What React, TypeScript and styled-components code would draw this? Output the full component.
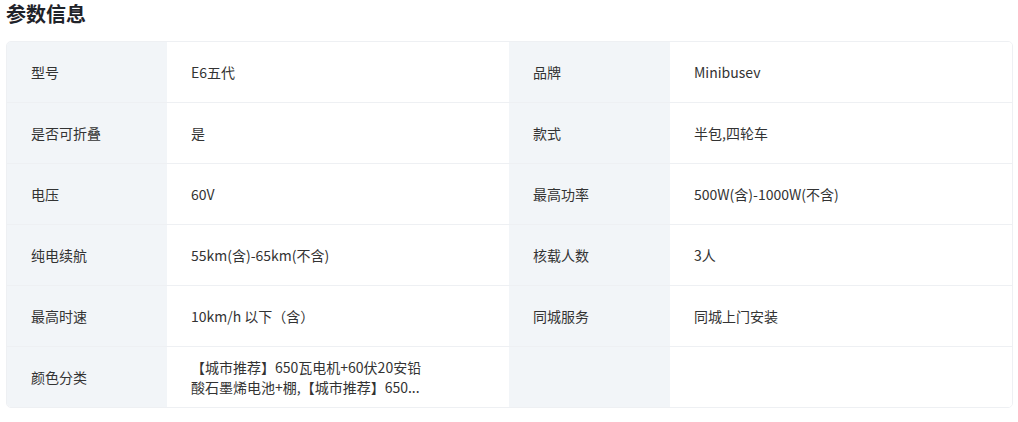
import React from 'react'
import styled, { createGlobalStyle } from 'styled-components'

const GlobalStyle = createGlobalStyle`
  body {
    margin: 0;
    background: #fff;
    font-family: "Noto Sans CJK SC", "Noto Sans", sans-serif;
  }
`

const Page = styled.div`
  padding: 0 5px 0 6px;
`

const Title = styled.h2`
  margin: 0 0 13px;
  font-size: 20px;
  line-height: 28px;
  font-weight: 700;
  color: #1f2329;
`

const Table = styled.div`
  display: grid;
  grid-template-columns: 160px 342px 161px 1fr;
  border: 1px solid #eef0f3;
  border-radius: 5px;
  overflow: hidden;
`

const Cell = styled.div<{ $label?: boolean; $last?: boolean }>`
  display: flex;
  align-items: center;
  padding: 0 24px;
  box-sizing: border-box;
  font-size: 14px;
  color: #333;
  background: ${(p) => (p.$label ? '#f2f5f8' : '#fff')};
  border-bottom: ${(p) => (p.$last ? 'none' : '1px solid #eef0f3')};
  height: ${(p) => (p.$last ? '60px' : '61px')};
`

const Lines = styled.span`
  display: flex;
  flex-direction: column;
  line-height: 20px;
  white-space: nowrap;
`

const rows: [string, React.ReactNode, string, string][] = [
  ['型号', 'E6五代', '品牌', 'Minibusev'],
  ['是否可折叠', '是', '款式', '半包,四轮车'],
  ['电压', '60V', '最高功率', '500W(含)-1000W(不含)'],
  ['纯电续航', '55km(含)-65km(不含)', '核载人数', '3人'],
  ['最高时速', '10km/h 以下（含）', '同城服务', '同城上门安装'],
  [
    '颜色分类',
    <Lines>
      <span>【城市推荐】650瓦电机+60伏20安铅</span>
      <span>酸石墨烯电池+棚,【城市推荐】650...</span>
    </Lines>,
    '',
    '',
  ],
]

export default function App() {
  return (
    <Page>
      <GlobalStyle />
      <Title>参数信息</Title>
      <Table>
        {rows.map((r, i) => {
          const last = i === rows.length - 1
          return (
            <React.Fragment key={i}>
              <Cell $label $last={last}>{r[0]}</Cell>
              <Cell $last={last}>{r[1]}</Cell>
              <Cell $label $last={last}>{r[2]}</Cell>
              <Cell $last={last}>{r[3]}</Cell>
            </React.Fragment>
          )
        })}
      </Table>
    </Page>
  )
}
